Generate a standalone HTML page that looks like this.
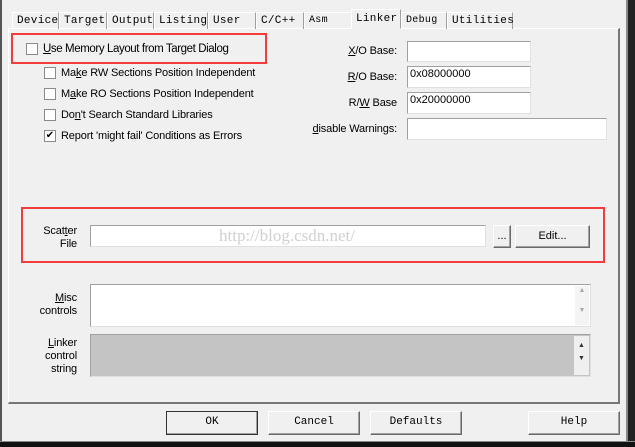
<!DOCTYPE html>
<html><head><style>
*{margin:0;padding:0;box-sizing:border-box}
body{width:635px;height:447px;background:#f0f0f0;position:relative;overflow:hidden;font-family:"Liberation Sans",Arial,sans-serif;font-size:11px;color:#000}
.a{position:absolute}
.tab{position:absolute;top:12px;height:17px;font-family:"Liberation Mono",monospace;font-size:11px;padding:2px 0 0 4px;border-right:1px solid #a0a0a0;border-left:1px solid #fff;border-top:1px solid #fff;letter-spacing:0.3px}
.cb{position:absolute;width:12px;height:12px;border:1px solid #8a8a8a;background:#fff}
.lbl{position:absolute;white-space:nowrap;letter-spacing:-0.15px}
.inp{position:absolute;background:#fff;border:1px solid #a0a0a0;border-right-color:#e0e0e0;border-bottom-color:#e0e0e0;padding:1px 2px;font-size:11px}
.btn{position:absolute;border:1px solid #fff;border-right-color:#6a6a6a;border-bottom-color:#6a6a6a;box-shadow:inset -1px -1px 0 #a0a0a0;background:#f0f0f0;text-align:center;font-family:"Liberation Mono",monospace;font-size:11px;line-height:21px}
.red{position:absolute;border:2px solid #f23b3b}
u{text-decoration:underline}
.r{text-align:right}
</style></head><body>
<div class="a" style="left:0;top:0;width:2px;height:447px;background:#555"></div>
<div class="a" style="left:626px;top:0;width:2px;height:447px;background:#888"></div>
<div class="a" style="left:628px;top:0;width:7px;height:447px;background:#222"></div>
<div class="a" style="left:0;top:441px;width:635px;height:1px;background:#888"></div>
<div class="a" style="left:0;top:442px;width:635px;height:5px;background:#111"></div>

<div class="a" style="left:8px;top:28px;width:612px;height:376px;border-left:1px solid #fff;border-top:1px solid #fff;border-right:2px solid #777;border-bottom:2px solid #777"></div>

<div class="tab" style="left:12px;width:47px">Device</div>
<div class="tab" style="left:59px;width:48px">Target</div>
<div class="tab" style="left:107px;width:47px">Output</div>
<div class="tab" style="left:154px;width:54px">Listing</div>
<div class="tab" style="left:208px;width:48px">User</div>
<div class="tab" style="left:256px;width:48px">C/C++</div>
<div class="tab" style="left:304px;width:48px;font-size:10px">Asm</div>
<div class="tab" style="left:351px;top:9px;height:20px;width:50px;background:#f0f0f0;border-bottom:1px solid #f0f0f0;padding-top:3px">Linker</div>
<div class="tab" style="left:401px;width:46px;font-size:10px">Debug</div>
<div class="tab" style="left:447px;width:66px">Utilities</div>

<div class="red" style="left:11px;top:33px;width:256px;height:31px"></div>
<div class="cb" style="left:26px;top:43px"></div>
<div class="lbl" style="left:43px;top:43px;font-size:11.5px;letter-spacing:-0.4px"><u>U</u>se Memory Layout from Target Dialog</div>

<div class="cb" style="left:44px;top:67px"></div>
<div class="lbl" style="left:61px;top:67px">Ma<u>k</u>e RW Sections Position Independent</div>
<div class="cb" style="left:44px;top:88px"></div>
<div class="lbl" style="left:61px;top:88px">M<u>a</u>ke RO Sections Position Independent</div>
<div class="cb" style="left:44px;top:109px"></div>
<div class="lbl" style="left:61px;top:109px">Do<u>n</u>'t Search Standard Libraries</div>
<div class="cb" style="left:44px;top:130px;font-size:10px;line-height:9px;text-align:center">✔</div>
<div class="lbl" style="left:61px;top:130px">Report 'might fail' Conditions as Errors</div>

<div class="lbl r" style="left:300px;width:97px;top:45px"><u>X</u>/O Base:</div>
<div class="inp" style="left:407px;top:41px;width:124px;height:21px"></div>
<div class="lbl r" style="left:300px;width:97px;top:71px"><u>R</u>/O Base:</div>
<div class="inp" style="left:407px;top:66px;width:124px;height:22px">0x08000000</div>
<div class="lbl r" style="left:300px;width:97px;top:97px">R/<u>W</u> Base</div>
<div class="inp" style="left:407px;top:92px;width:124px;height:22px">0x20000000</div>
<div class="lbl r" style="left:300px;width:97px;top:123px"><u>d</u>isable Warnings:</div>
<div class="inp" style="left:407px;top:118px;width:200px;height:22px"></div>

<div class="red" style="left:21px;top:207px;width:584px;height:56px"></div>
<div class="lbl r" style="left:20px;width:57px;top:225px;line-height:13px">Scat<u>t</u>er<br>File</div>
<div class="inp" style="left:90px;top:225px;width:396px;height:22px;font-family:'Liberation Serif',serif;font-size:17px;color:#d0d0d0;padding:0 0 0 128px;line-height:19px">http://blog.csdn.net/</div>
<div class="btn" style="left:493px;top:225px;width:18px;height:23px;font-family:'Liberation Sans';line-height:20px">...</div>
<div class="btn" style="left:515px;top:225px;width:75px;height:23px;font-family:'Liberation Sans'">Edit...</div>

<div class="lbl r" style="left:20px;width:57px;top:292px;line-height:13px"><u>M</u>isc<br>controls</div>
<div class="inp" style="left:90px;top:284px;width:501px;height:43px"></div>
<div class="a" style="left:575px;top:286px;width:14px;height:39px;background:#f4f4f4;color:#aaa;font-size:7px;text-align:center;line-height:10px">▲<br><br>▼</div>

<div class="lbl r" style="left:20px;width:57px;top:337px;line-height:13px"><u>L</u>inker<br>control<br>string</div>
<div class="inp" style="left:90px;top:334px;width:501px;height:43px;background:#c4c4c4"></div>
<div class="a" style="left:574px;top:336px;width:15px;height:39px;background:#efefef;color:#333;font-size:7px;text-align:center;line-height:13px;padding-top:3px">▲<br>▼</div>

<div class="btn" style="left:166px;top:411px;width:92px;height:24px;border:1px solid #333">OK</div>
<div class="btn" style="left:268px;top:411px;width:92px;height:24px">Cancel</div>
<div class="btn" style="left:370px;top:411px;width:92px;height:24px">Defaults</div>
<div class="btn" style="left:528px;top:411px;width:92px;height:24px">Help</div>
</body></html>
